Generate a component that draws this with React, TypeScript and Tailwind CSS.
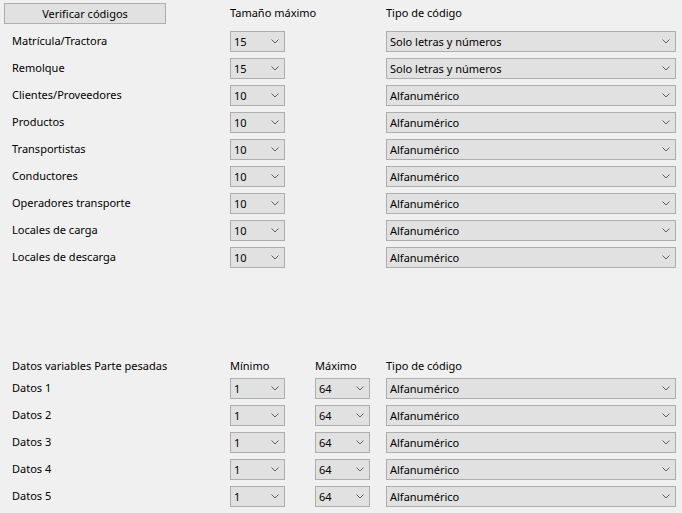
import React from "react";

const font = { fontFamily: '"Noto Sans", "Open Sans", sans-serif' };

function Chevron() {
  return (
    <svg width="8" height="5" viewBox="0 0 8 5" className="shrink-0">
      <polyline points="0.5,0.5 4,4 7.5,0.5" fill="none" stroke="#606060" strokeWidth="1" />
    </svg>
  );
}

function Combo({ value, w }: { value: string; w: string }) {
  return (
    <div
      className={`${w} flex h-[21px] shrink-0 items-center justify-between border border-[#adadad] bg-[#e1e1e1] pl-[3px] pr-[5px] text-[11px] leading-none text-black`}
    >
      <span>{value}</span>
      <Chevron />
    </div>
  );
}

const codeRows: [string, string, string][] = [
  ["Matrícula/Tractora", "15", "Solo letras y números"],
  ["Remolque", "15", "Solo letras y números"],
  ["Clientes/Proveedores", "10", "Alfanumérico"],
  ["Productos", "10", "Alfanumérico"],
  ["Transportistas", "10", "Alfanumérico"],
  ["Conductores", "10", "Alfanumérico"],
  ["Operadores transporte", "10", "Alfanumérico"],
  ["Locales de carga", "10", "Alfanumérico"],
  ["Locales de descarga", "10", "Alfanumérico"],
];

const datos = ["Datos 1", "Datos 2", "Datos 3", "Datos 4", "Datos 5"];

export default function App() {
  return (
    <div className="h-[513px] w-[682px] overflow-hidden bg-[#f0f0f0] pt-[3px] text-[11px] text-black" style={font}>
      {/* cabecera */}
      <div className="flex h-[21px] items-center">
        <button className="ml-[4px] h-[21px] w-[162px] border border-[#adadad] bg-[#e1e1e1] text-[11px] leading-none">
          Verificar códigos
        </button>
        <div className="ml-[64px] w-[156px]">Tamaño máximo</div>
        <div>Tipo de código</div>
      </div>

      <div className="mt-[7px] flex flex-col gap-[6px]">
        {codeRows.map(([label, size, type]) => (
          <div key={label} className="flex h-[21px] items-center">
            <div className="w-[230px] pl-[12px]">{label}</div>
            <Combo value={size} w="w-[55px]" />
            <div className="w-[101px]" />
            <Combo value={type} w="w-[290px]" />
          </div>
        ))}
      </div>

      <div className="mt-[90px] flex h-[16px] items-center">
        <div className="w-[230px] pl-[12px]">Datos variables Parte pesadas</div>
        <div className="w-[85px]">Mínimo</div>
        <div className="w-[71px]">Máximo</div>
        <div>Tipo de código</div>
      </div>

      <div className="mt-[4px] flex flex-col gap-[6px]">
        {datos.map((d) => (
          <div key={d} className="flex h-[21px] items-center">
            <div className="w-[230px] pl-[12px]">{d}</div>
            <Combo value="1" w="w-[55px]" />
            <div className="w-[30px]" />
            <Combo value="64" w="w-[55px]" />
            <div className="w-[16px]" />
            <Combo value="Alfanumérico" w="w-[290px]" />
          </div>
        ))}
      </div>
    </div>
  );
}
